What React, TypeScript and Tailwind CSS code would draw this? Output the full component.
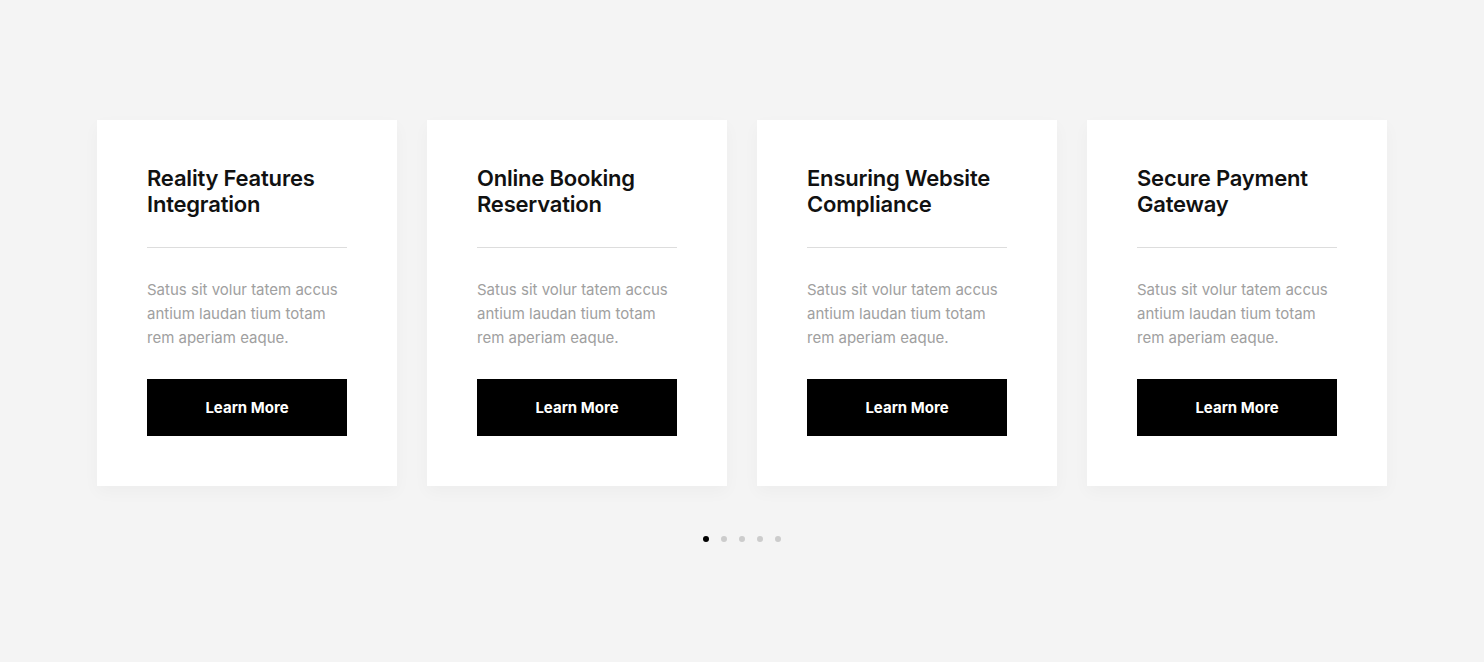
const cards = [
  { title: "Reality Features Integration" },
  { title: "Online Booking Reservation" },
  { title: "Ensuring Website Compliance" },
  { title: "Secure Payment Gateway" },
];

function Card({ title }: { title: string }) {
  return (
    <div className="w-[300px] bg-white px-[50px] pt-[45px] pb-[50px] shadow-[0_6px_16px_rgba(0,0,0,0.03)]">
      <h3 className="text-[22px] leading-[26px] font-semibold text-[#111] tracking-[-0.2px] pr-4">
        {title}
      </h3>
      <div className="mt-[30px] h-px bg-[#dddddd]" />
      <p className="mt-[30px] text-[15px] leading-[24px] text-[#a0a0a0]">
        Satus sit volur tatem accus antium laudan tium totam rem aperiam eaque.
      </p>
      <button className="mt-[29px] flex h-[57px] w-full items-center justify-center bg-black pt-[2px] text-[15px] font-bold text-white">
        Learn More
      </button>
    </div>
  );
}

export default function App() {
  return (
    <div
      className="min-h-[662px] bg-[#f4f4f4] pt-[120px]"
      style={{ fontFamily: "Inter, 'Noto Sans', sans-serif" }}
    >
      <div className="flex justify-center gap-[30px]">
        {cards.map((c) => (
          <Card key={c.title} title={c.title} />
        ))}
      </div>
      <div className="mt-[50px] flex justify-center gap-3">
        {[0, 1, 2, 3, 4].map((i) => (
          <span
            key={i}
            className={`h-[6px] w-[6px] rounded-full ${i === 0 ? "bg-black" : "bg-[#cccccc]"}`}
          />
        ))}
      </div>
    </div>
  );
}
